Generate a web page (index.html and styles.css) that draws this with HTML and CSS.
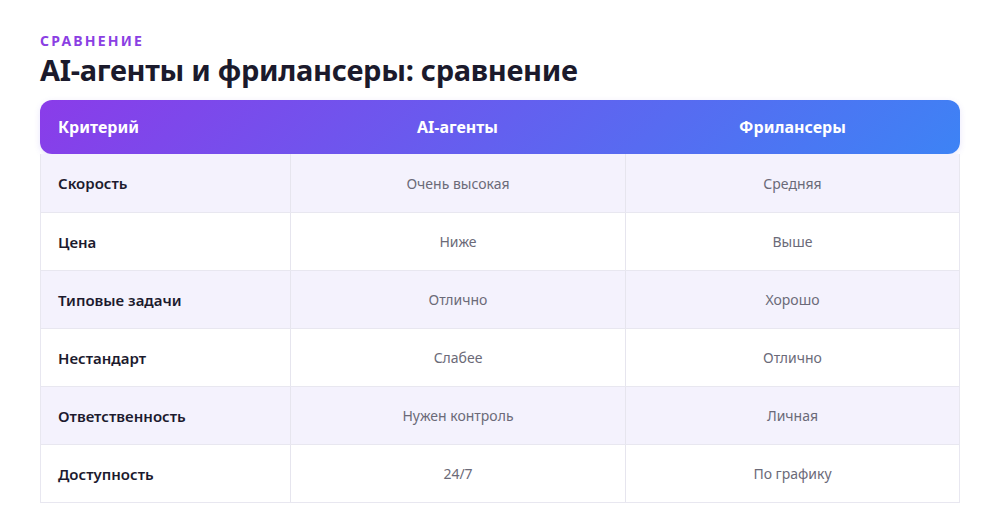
FILE: index.html
```html
<!DOCTYPE html>
<html lang="ru">
<head>
<meta charset="utf-8">
<link rel="stylesheet" href="styles.css">
</head>
<body>
<main class="page">
  <div class="eyebrow">Сравнение</div>
  <h1 class="title">AI-агенты и фрилансеры: сравнение</h1>
  <div class="table">
    <div class="head">
      <div class="hcell left">Критерий</div>
      <div class="hcell">AI-агенты</div>
      <div class="hcell">Фрилансеры</div>
    </div>
    <div class="body">
      <div class="row alt"><div class="cell crit">Скорость</div><div class="cell">Очень высокая</div><div class="cell">Средняя</div></div>
      <div class="row"><div class="cell crit">Цена</div><div class="cell">Ниже</div><div class="cell">Выше</div></div>
      <div class="row alt"><div class="cell crit">Типовые задачи</div><div class="cell">Отлично</div><div class="cell">Хорошо</div></div>
      <div class="row"><div class="cell crit">Нестандарт</div><div class="cell">Слабее</div><div class="cell">Отлично</div></div>
      <div class="row alt"><div class="cell crit">Ответственность</div><div class="cell">Нужен контроль</div><div class="cell">Личная</div></div>
      <div class="row"><div class="cell crit">Доступность</div><div class="cell">24/7</div><div class="cell">По графику</div></div>
    </div>
  </div>
</main>
</body>
</html>
```
FILE: styles.css
```css
* { box-sizing: border-box; }
html, body { margin: 0; padding: 0; background: #ffffff; }
body { font-family: "Noto Sans", "Open Sans", sans-serif; color: #1c1a2e; }
.page { padding: 32px 40px 0 40px; }
.eyebrow {
  font-size: 14px; font-weight: 700; letter-spacing: 2.2px;
  text-transform: uppercase; color: #8b3fe3; line-height: 18px;
}
.title {
  margin: 0; font-size: 29px; font-weight: 700; line-height: 40px;
  color: #1b1a2c; letter-spacing: -0.3px;
}
.table { margin-top: 10px; width: 920px; }
.head {
  display: grid; grid-template-columns: 250px 335px 335px;
  height: 54px; align-items: center; border-radius: 12px;
  background: linear-gradient(135deg, #8a3ce9 0%, #3d83f5 100%);
  color: #ffffff; font-weight: 700; font-size: 16px;
  box-shadow: 0 2px 6px rgba(99, 80, 230, 0.15);
}
.hcell { text-align: center; }
.hcell.left { text-align: left; padding-left: 18px; }
.body { border: 1px solid #e8e7f0; border-top: none; }
.row {
  display: grid; grid-template-columns: 249px 335px 334px;
  height: 58px; align-items: stretch; border-top: 1px solid #e8e7f0;
}
.row:first-child { border-top: none; }
.row.alt { background: #f4f2fd; }
.cell {
  display: flex; align-items: center; justify-content: center;
  font-size: 14px; color: #6b6a78; border-left: 1px solid #e6e5ee;
}
.cell.crit {
  justify-content: flex-start; padding-left: 17px; border-left: none;
  font-weight: 600; font-size: 15px; color: #1c1a2e;
}
```
